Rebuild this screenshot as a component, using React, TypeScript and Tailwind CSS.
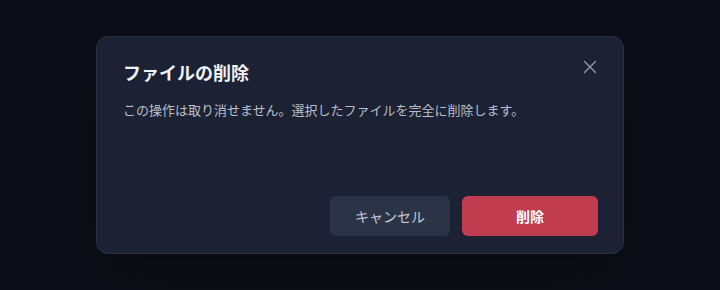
import { X } from "lucide-react";

function DeleteDialog() {
  return (
    <div className="relative flex h-[218px] w-[528px] flex-col rounded-xl border border-[#2a3142] bg-[#1c2233] pl-[26px] pr-[25px] pt-[22px] pb-[17px] shadow-2xl">
      <button className="absolute right-[22px] top-[19px] text-[#8e96a8]">
        <X size={22} strokeWidth={1.5} />
      </button>
      <h2 className="text-[18px] font-bold leading-[26px] text-[#eef1f6]">ファイルの削除</h2>
      <p className="mt-[15px] text-[13px] leading-[20px] text-[#b9bfcc]">
        この操作は取り消せません。選択したファイルを完全に削除します。
      </p>
      <div className="mt-auto flex justify-end gap-3">
        <button className="h-10 w-[120px] rounded-md bg-[#2b3446] text-[14px] text-[#c3c9d6]">
          キャンセル
        </button>
        <button className="h-10 w-[136px] rounded-md bg-[#c23c4f] text-[14px] font-bold text-white">
          削除
        </button>
      </div>
    </div>
  );
}

export default function App() {
  return (
    <div
      className="flex h-[290px] w-full items-center justify-center bg-[#0b0e16]"
      style={{ fontFamily: '"Noto Sans CJK JP", "Noto Sans", sans-serif' }}
    >
      <DeleteDialog />
    </div>
  );
}
